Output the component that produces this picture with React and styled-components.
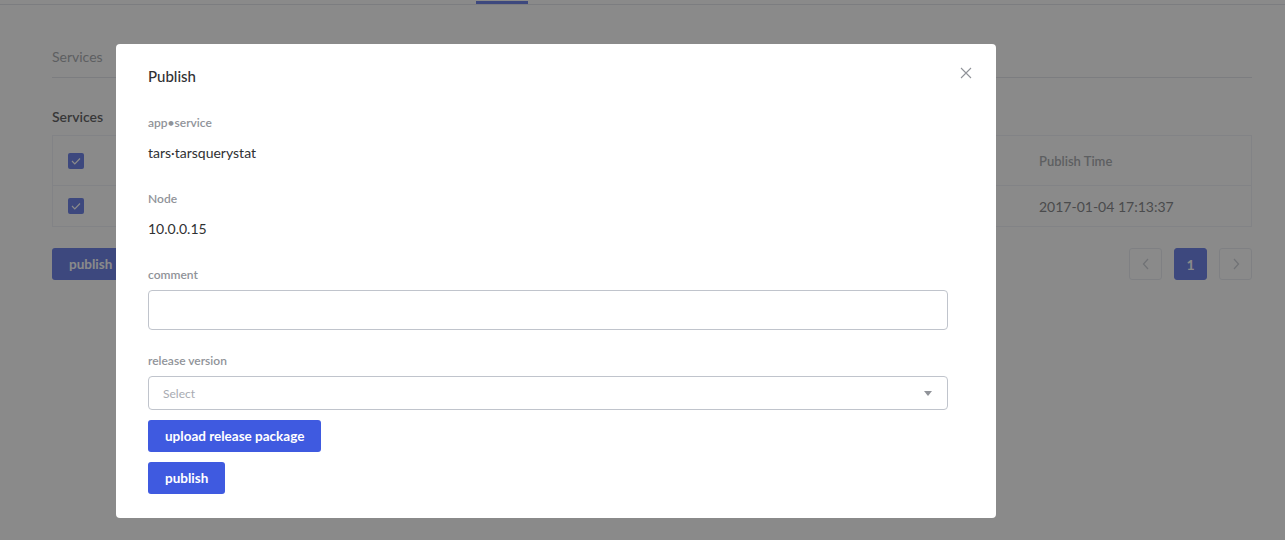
import React from 'react';
import styled, { createGlobalStyle } from 'styled-components';

const GlobalStyle = createGlobalStyle`
  html, body {
    margin: 0;
    padding: 0;
    background: #ffffff;
    font-family: Lato, "Liberation Sans", sans-serif;
    overflow: hidden;
  }
  * { box-sizing: border-box; }
`;

// page behind the dialog
const Page = styled.div`
  width: 1285px;
  height: 540px;
  background: #ffffff;
`;

const TabBar = styled.div`
  display: flex;
  height: 5px;
  padding-left: 476px;
  border-bottom: 1px solid #dcdfe6;
`;

const ActiveTab = styled.div`
  width: 52px;
  height: 4px;
  border-bottom: 3px solid #3f5ae0;
`;

const Content = styled.div`
  padding: 0 33px 0 52px;
`;

const Crumb = styled.div`
  height: 73px;
  padding-top: 42px;
  font-size: 14px;
  line-height: 20px;
  color: #909399;
  border-bottom: 1px solid #dcdfe6;
`;

const SectionTitle = styled.div`
  margin-top: 29px;
  font-size: 14px;
  line-height: 20px;
  color: #303133;
  font-weight: 600;
`;

const Table = styled.div`
  margin-top: 8px;
  border: 1px solid #ebeef5;
`;

const Row = styled.div`
  display: grid;
  grid-template-columns: 48px 1fr 1fr 133px 228px;
  align-items: center;
  height: ${(p) => (p.head ? '49px' : '41px')};
  border-top: ${(p) => (p.head ? 'none' : '1px solid #ebeef5')};
`;

const Cell = styled.div`
  padding: 0 16px;
  font-size: ${(p) => (p.head ? '13px' : '14px')};
  font-weight: ${(p) => (p.head ? 600 : 400)};
  color: ${(p) => (p.head ? '#909399' : '#606266')};
  white-space: nowrap;
`;

const CheckCell = styled.div`
  padding-left: 15px;
  display: flex;
  align-items: center;
`;

const Checkbox = styled.span`
  display: inline-flex;
  align-items: center;
  justify-content: center;
  width: 16px;
  height: 16px;
  border-radius: 2px;
  background: #3f5ae0;
`;

const Footer = styled.div`
  display: flex;
  justify-content: space-between;
  align-items: flex-start;
  margin-top: 21px;
`;

const Pager = styled.div`
  display: flex;
  gap: 12px;
`;

const PageBtn = styled.div`
  width: 33px;
  height: 32px;
  display: flex;
  align-items: center;
  justify-content: center;
  border-radius: 3px;
  border: 1px solid ${(p) => (p.active ? '#3f5ae0' : '#e4e7ed')};
  background: ${(p) => (p.active ? '#3f5ae0' : '#ffffff')};
  color: ${(p) => (p.active ? '#ffffff' : '#c0c4cc')};
  font-size: 14px;
  font-weight: 700;
`;

const Button = styled.button`
  display: inline-flex;
  align-items: center;
  height: 32px;
  padding: 0 17px;
  border: none;
  border-radius: 3px;
  background: #3f5ae0;
  color: #ffffff;
  font-family: Lato, "Liberation Sans", sans-serif;
  font-size: 13.5px;
  font-weight: 700;
  margin-top: ${(p) => p.mt || 0}px;
  align-self: flex-start;
`;

// dialog
const Overlay = styled.div`
  position: fixed;
  inset: 0;
  background: rgba(60, 60, 60, 0.6);
  padding: 44px 0 0 116px;
`;

const Dialog = styled.div`
  position: relative;
  width: 880px;
  background: #ffffff;
  border-radius: 4px;
  padding: 22px 48px 24px 32px;
  display: flex;
  flex-direction: column;
`;

const Title = styled.div`
  font-size: 15px;
  line-height: 20px;
  font-weight: 500;
  color: #303133;
  margin-bottom: 26px;
`;

const Close = styled.button`
  position: absolute;
  top: 23px;
  right: 24px;
  width: 12px;
  height: 12px;
  padding: 0;
  border: none;
  background: none;
  display: flex;
`;

const Label = styled.div`
  font-size: 12px;
  line-height: 20px;
  font-weight: 600;
  color: #909399;
  margin-top: 1px;
  margin-bottom: ${(p) => p.mb || 10}px;
`;

const Value = styled.div`
  font-size: 14px;
  line-height: 20px;
  color: #303133;
  margin-bottom: 25px;
`;

const Input = styled.div`
  height: 40px;
  border: 1px solid #c0c4cc;
  border-radius: 4px;
  margin-bottom: 20px;
`;

const Select = styled.div`
  height: 34px;
  border: 1px solid #c0c4cc;
  border-radius: 4px;
  display: flex;
  align-items: center;
  justify-content: space-between;
  padding: 0 15px 0 14px;
  font-size: 12px;
  color: #a8abb2;
`;

const Arrow = styled.span`
  width: 0;
  height: 0;
  border-left: 4px solid transparent;
  border-right: 4px solid transparent;
  border-top: 5px solid #909399;
`;

const Check = () => (
  <svg width="10" height="8" viewBox="0 0 10 8" fill="none">
    <path d="M1 4l2.8 2.8L9 1.5" stroke="#ffffff" strokeWidth="1.2" />
  </svg>
);

const Chevron = ({ dir }) => (
  <svg width="8" height="12" viewBox="0 0 8 12" fill="none">
    <path
      d={dir === 'left' ? 'M6 1L1.5 6 6 11' : 'M2 1l4.5 5L2 11'}
      stroke="#c0c4cc"
      strokeWidth="1.3"
    />
  </svg>
);

const App = () => (
  <>
    <GlobalStyle />
    <Page>
      <TabBar>
        <ActiveTab />
      </TabBar>
      <Content>
        <Crumb>Services</Crumb>
        <SectionTitle>Services</SectionTitle>
        <Table>
          <Row head>
            <CheckCell>
              <Checkbox>
                <Check />
              </Checkbox>
            </CheckCell>
            <Cell head />
            <Cell head />
            <Cell head>Publish Version</Cell>
            <Cell head>Publish Time</Cell>
          </Row>
          <Row>
            <CheckCell>
              <Checkbox>
                <Check />
              </Checkbox>
            </CheckCell>
            <Cell />
            <Cell />
            <Cell />
            <Cell>2017-01-04 17:13:37</Cell>
          </Row>
        </Table>
        <Footer>
          <Button>publish</Button>
          <Pager>
            <PageBtn>
              <Chevron dir="left" />
            </PageBtn>
            <PageBtn active>1</PageBtn>
            <PageBtn>
              <Chevron dir="right" />
            </PageBtn>
          </Pager>
        </Footer>
      </Content>
    </Page>
    <Overlay>
      <Dialog>
        <Title>Publish</Title>
        <Close aria-label="close">
          <svg width="12" height="12" viewBox="0 0 12 12" fill="none">
            <path d="M1 1l10 10M11 1L1 11" stroke="#909399" strokeWidth="1.1" />
          </svg>
        </Close>
        <Label>app•service</Label>
        <Value>tars·tarsquerystat</Value>
        <Label>Node</Label>
        <Value>10.0.0.15</Value>
        <Label mb={5}>comment</Label>
        <Input />
        <Label mb={5}>release version</Label>
        <Select>
          Select
          <Arrow />
        </Select>
        <Button mt={10}>upload release package</Button>
        <Button mt={10}>publish</Button>
      </Dialog>
    </Overlay>
  </>
);

export default App;
